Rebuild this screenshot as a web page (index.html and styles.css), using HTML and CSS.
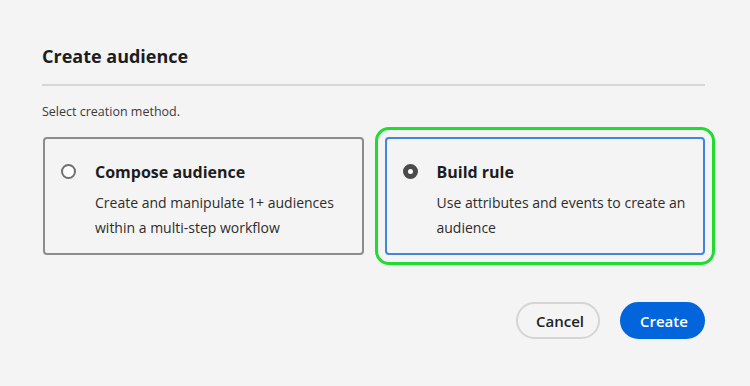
FILE: index.html
```html
<!DOCTYPE html>
<html lang="en">
<head>
  <meta charset="UTF-8" />
  <title>Create audience</title>
  <link rel="stylesheet" href="styles.css">
</head>
<body>
  <div class="dialog">
    <h2 class="dialog-title">Create audience</h2>
    <hr class="divider" />
    <p class="hint">Select creation method.</p>

    <div class="options">
      <label class="option">
        <span class="radio"></span>
        <span class="option-body">
          <span class="option-title">Compose audience</span>
          <span class="option-desc">Create and manipulate 1+ audiences within a multi-step workflow</span>
        </span>
      </label>
      <label class="option selected">
        <span class="radio"></span>
        <span class="option-body">
          <span class="option-title">Build rule</span>
          <span class="option-desc">Use attributes and events to create an audience</span>
        </span>
      </label>
    </div>

    <div class="actions">
      <button class="btn btn-secondary">Cancel</button>
      <button class="btn btn-primary">Create</button>
    </div>
  </div>
</body>
</html>
```

FILE: styles.css
```css
:root {
  --bg: #f4f4f4;
  --text: #222;
  --accent: #0265dc;
}

* {
  box-sizing: border-box;
}

body {
  margin: 0;
  background: var(--bg);
  color: var(--text);
  font-family: 'Open Sans', sans-serif;
}

.dialog {
  padding: 42px 45px 0 42px;
}

.dialog-title {
  margin: 0;
  font-size: 18px;
  font-weight: 700;
  line-height: 28px;
  color: #1d1d1d;
}

.divider {
  border: none;
  border-top: 2px solid #d6d6d6;
  margin: 14px 0 0;
}

.hint {
  margin: 17px 0 0;
  font-size: 12.5px;
  line-height: 18px;
  color: #3a3a3a;
}

.options {
  display: grid;
  grid-template-columns: 1fr 1fr;
  gap: 21px;
  margin-top: 16px;
  padding-left: 1px;
}

.option {
  display: flex;
  gap: 19px;
  height: 118px;
  padding: 21px 16px 0 16px;
  border: 2px solid #8c8c8c;
  border-radius: 4px;
  cursor: pointer;
}

.option.selected {
  border-color: #3f86dc;
  outline: 3px solid #1fdc2e;
  outline-offset: 7px;
}

.radio {
  flex: none;
  width: 15px;
  height: 15px;
  margin-top: 4px;
  border: 2px solid #707070;
  border-radius: 50%;
  background: #fff;
}

.selected .radio {
  border: 5px solid #4b4b4b;
}

.option-body {
  display: flex;
  flex-direction: column;
}

.option-title {
  font-size: 16px;
  font-weight: 700;
  line-height: 24px;
  color: #1d1d1d;
}

.option-desc {
  margin-top: 6px;
  font-size: 14px;
  line-height: 25px;
  color: #2c2c2c;
}

.actions {
  display: flex;
  justify-content: flex-end;
  gap: 20px;
  margin-top: 47px;
}

.btn {
  height: 37px;
  padding: 0 18px;
  border-radius: 19px;
  font-family: inherit;
  font-size: 15px;
  font-weight: 600;
  cursor: pointer;
}

.btn-secondary {
  background: transparent;
  border: 2px solid #d5d5d5;
  color: #222;
  width: 84px;
}

.btn-primary {
  background: var(--accent);
  border: 2px solid var(--accent);
  color: #fff;
  width: 85px;
}
```
